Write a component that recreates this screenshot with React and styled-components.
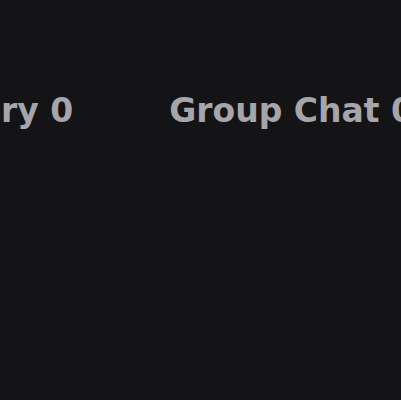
import React from 'react';
import styled, { createGlobalStyle } from 'styled-components';

const TITLES = ['Category 0', 'Group Chat 0', 'Group Chat 1'];

const GlobalStyle = createGlobalStyle`
  html, body {
    margin: 0;
    padding: 0;
    background: #141416;
  }
`;

const Screen = styled.div`
  width: 401px;
  height: 400px;
  overflow: hidden;
  background: #141416;
  font-family: 'DejaVu Sans', Verdana, sans-serif;
`;

const Strip = styled.div`
  display: flex;
  gap: 96px;
  margin-left: -130px;
  padding-top: 91px;
  white-space: nowrap;
`;

const Title = styled.div`
  flex: none;
  font-size: 33px;
  font-weight: bold;
  color: #a6a6aa;
`;

export default function App() {
  return (
    <Screen>
      <GlobalStyle />
      <Strip>
        {TITLES.map((t) => (
          <Title key={t}>{t}</Title>
        ))}
      </Strip>
    </Screen>
  );
}
